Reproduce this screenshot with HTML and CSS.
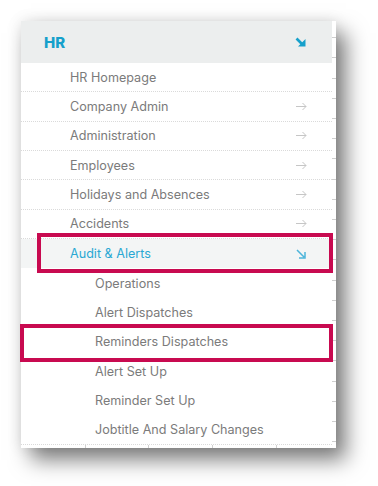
FILE: index.html
```html
<!DOCTYPE html>
<html lang="en">
    <head>
        <title>HR menu</title>
        <meta charset="utf-8">
        <link rel="stylesheet" href="styles.css">
    </head>

    <body>
        <div class="panel">
            <div class="menu">
                <div class="head">
                    <span>HR</span>
                    <svg class="down" width="11" height="10" viewBox="0 0 11 10"><path d="M1.5 1.5l6 6" stroke="#16a0cb" stroke-width="2.6" fill="none"/><path d="M3 9.5h7.5V2z" fill="#16a0cb"/></svg>
                </div>
                <ul class="items">
                    <li class="item">HR Homepage</li>
                    <li class="item">Company Admin <svg class="go" width="11" height="9" viewBox="0 0 11 9"><path d="M0 4.5h10M6.5 1l3.5 3.5L6.5 8" stroke="#c6c6c6" fill="none"/></svg></li>
                    <li class="item">Administration <svg class="go" width="11" height="9" viewBox="0 0 11 9"><path d="M0 4.5h10M6.5 1l3.5 3.5L6.5 8" stroke="#c6c6c6" fill="none"/></svg></li>
                    <li class="item">Employees <svg class="go" width="11" height="9" viewBox="0 0 11 9"><path d="M0 4.5h10M6.5 1l3.5 3.5L6.5 8" stroke="#c6c6c6" fill="none"/></svg></li>
                    <li class="item">Holidays and Absences <svg class="go" width="11" height="9" viewBox="0 0 11 9"><path d="M0 4.5h10M6.5 1l3.5 3.5L6.5 8" stroke="#c6c6c6" fill="none"/></svg></li>
                    <li class="item">Accidents <svg class="go" width="11" height="9" viewBox="0 0 11 9"><path d="M0 4.5h10M6.5 1l3.5 3.5L6.5 8" stroke="#c6c6c6" fill="none"/></svg></li>
                    <li class="item open">Audit &amp; Alerts <svg class="go" width="10" height="10" viewBox="0 0 10 10"><path d="M1 1l7 7M3 9h6V3" stroke="#4db5da" stroke-width="1.5" fill="none"/></svg></li>
                    <li class="sub">Operations</li>
                    <li class="sub">Alert Dispatches</li>
                    <li class="sub">Reminders Dispatches</li>
                    <li class="sub">Alert Set Up</li>
                    <li class="sub">Reminder Set Up</li>
                    <li class="sub">Jobtitle And Salary Changes</li>
                </ul>
                <div class="foot"></div>
            </div>
            <div class="edge"></div>
        </div>

        <div class="mark mark-audit"></div>
        <div class="mark mark-reminders"></div>
    </body>
</html>
```

FILE: styles.css
```css
body {
    margin: 0;
    height: 486px;
    overflow: hidden;
    background: #fff;
    font-family: Inter, "Liberation Sans", sans-serif;
}
.panel {
    display: flex;
    width: 315px;
    margin: 21px 0 0 21px;
    background: #fff;
    box-shadow: 10px 12px 20px rgba(0,0,0,0.5), 0 0 14px rgba(0,0,0,0.1);
}
.menu {
    width: 311px;
}
.edge {
    width: 4px;
    background: repeating-linear-gradient(to bottom, transparent 0, transparent 19.2px, #cfcfcf 19.2px, #cfcfcf 20.2px) 0 -3px;
}
.head {
    display: flex;
    align-items: center;
    justify-content: space-between;
    height: 42px;
    padding: 0 26px 0 23px;
    background: #eceeee;
    color: #16a0cb;
    font-size: 15px;
    font-weight: 800;
}
.items {
    list-style: none;
    margin: 0;
    padding: 0;
}
.item, .sub {
    display: flex;
    align-items: center;
    justify-content: space-between;
    box-sizing: border-box;
    height: 29.35px;
    color: #7b7b7b;
    font-size: 12.6px;
}
.item {
    padding: 0 25px 0 49px;
    border-bottom: 1px dotted #dadada;
}
.sub {
    padding-left: 74px;
}
.open {
    background: #f3f5f5;
    color: #2aa8d3;
    border-bottom: none;
    padding-right: 26px;
}
.foot {
    height: 3px;
    border-top: 1px dotted #dadada;
    background:
        linear-gradient(#d0d0d0, #d0d0d0) 64px 0 / 1px 4px no-repeat,
        linear-gradient(#d0d0d0, #d0d0d0) 127px 0 / 1px 4px no-repeat,
        linear-gradient(#d0d0d0, #d0d0d0) 191px 0 / 1px 4px no-repeat,
        linear-gradient(#d0d0d0, #d0d0d0) 255px 0 / 1px 4px no-repeat;
}
.mark {
    position: absolute;
    box-sizing: border-box;
    border: 4px solid #c80a50;
}
.mark-audit {
    left: 37px;
    top: 233px;
    width: 296px;
    height: 40px;
}
.mark-reminders {
    left: 20px;
    top: 324px;
    width: 313px;
    height: 38px;
}
```
